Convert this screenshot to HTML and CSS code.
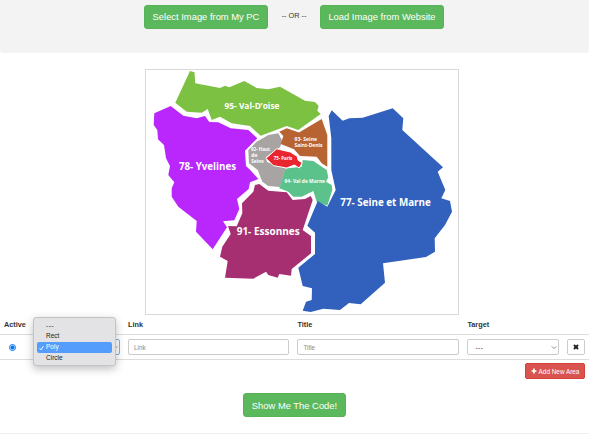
FILE: index.html
```html
<!DOCTYPE html>
<html lang="en">
<head>
<meta charset="utf-8">
<title>Image Map Generator</title>
<link rel="stylesheet" href="styles.css">
</head>
<body>
<header class="picker">
  <button class="btn btn-large"><span>Select Image from My PC</span></button>
  <span class="or">-- OR --</span>
  <button class="btn btn-large"><span>Load Image from Website</span></button>
</header>
<main>
  <div class="map-frame">
    <svg class="map" viewBox="146 70 312 244" aria-label="Map">
      <polygon fill="#7cc142" points="190,71 194.5,72.3 195.3,83.3 220,88 225,85.7 229.3,87.3 244.3,81 256.7,88 268.3,89.3 280,86.7 291.7,93.3 305,100.7 315,102 318.7,106 317.3,110.7 320.7,114 298.3,130 286.7,126 260.7,135.8 250,126 231.7,123.3 220,116.7 211.7,120 207.7,109 201.7,112.7 186.7,111.7 175.3,102.7"/>
      <polygon fill="#b927fc" points="170.7,106 183.3,115.7 196.7,118.3 205,116 209.3,122 218.3,122.3 230.7,128.3 248.3,130 257.3,138.3 245,150.7 246,166 251,170.7 258.3,179 250,182.3 248.7,189 237,199 239.3,209 234.3,220.3 223,221.3 227,227.3 212.7,249.3 196,231.7 196.7,221 178.3,206.7 171.7,196.7 171.7,188.3 174.3,182.3 168.3,175 170,166 166,158.3 164,145 158,139.3 157.3,130 153.7,125 154.3,113.3"/>
      <polygon fill="#a8a4a3" points="278.3,133.3 282.3,140.7 280,147.3 266,157 267,162 286,168.5 280,187 268.3,186 262.3,181.7 257.7,170 249,163.3 248.3,150 256.7,141.7 268.3,135"/>
      <polygon fill="#b86332" points="279.3,131.7 286.7,128.3 299,132.5 321.7,119 327.3,135 327.3,166.7 322,163.5 316.7,156.7 300,156 294,149.3 280.7,144 283.3,136"/>
      <polygon fill="#5cc28b" points="285.7,168.5 301.7,166.7 302.7,160 313.3,161 326.7,170 328.3,177.3 326,181.7 331.7,185 332.3,190 327.3,205.7 316.7,201.7 313.3,191 301.7,196.7 293.3,196.7 288.3,191.7 279.3,188.3"/>
      <polygon class="city" points="266,158.3 276.7,148.8 290.3,152 297.2,156.3 298.2,160.3 302.2,162.7 299.3,168 294.3,165 286.7,168 273.3,165.6"/>
      <polygon fill="#a62f72" points="255,185 259.3,184 268.3,190.7 286.7,192.3 292.7,200 305,199 310.7,196 312.7,200 302.7,230 311,236 311,253.3 291.7,269 291,275.7 279.3,274 277.7,277.7 268.3,275 266,271.7 253.3,278.7 225,277.7 227.7,261 220,256.7 222.3,246.7 230.7,234 228,226 236.7,226.3 242.3,213.3 242,203.3 253.3,191.7"/>
      <polygon fill="#3260bd" points="328.7,116 331.7,110.3 342.7,120.7 349.3,118.3 362.7,117.7 392.7,108.3 403.3,118.3 402.3,130 443,167.3 437.7,171.7 445.3,190 441.3,198.3 450,201 452,211.7 445,225 434.7,238.3 435,251.7 426,257 383,263.3 385,282.7 360.7,304.3 349,303 340,310 323.3,308.7 310.7,312 302.7,310.7 306,301.7 311.7,300 312,288.3 302.7,286 298.3,267.7 315,254 315,232.7 307.3,225.7 317.7,201 327.3,206.7 335.7,190 331.3,170 331.3,138.3"/>
      <g class="label label-m">
        <text x="224.5" y="108.5" textLength="55" lengthAdjust="spacingAndGlyphs">95- Val-D’oise</text>
      </g>
      <g class="label label-l">
        <text x="179" y="170" textLength="57" lengthAdjust="spacingAndGlyphs">78- Yvelines</text>
        <text x="236.7" y="235.2" textLength="63" lengthAdjust="spacingAndGlyphs">91- Essonnes</text>
        <text x="340.3" y="206.2" textLength="90.5" lengthAdjust="spacingAndGlyphs">77- Seine et Marne</text>
      </g>
      <g class="label label-s">
        <text x="251" y="151.3" textLength="19" lengthAdjust="spacingAndGlyphs">92- Haut</text>
        <text x="251.3" y="157.3">de</text>
        <text x="251.3" y="163.3" textLength="12.5" lengthAdjust="spacingAndGlyphs">Seine</text>
        <text x="294.5" y="140.7" textLength="22.5" lengthAdjust="spacingAndGlyphs">93- Seine</text>
        <text x="294.5" y="147.1" textLength="28" lengthAdjust="spacingAndGlyphs">Saint-Denis</text>
        <text x="273.8" y="160" textLength="18.5" lengthAdjust="spacingAndGlyphs">75- Paris</text>
        <text x="284.5" y="182.8" textLength="40.5" lengthAdjust="spacingAndGlyphs">94- Val de Marne</text>
      </g>
    </svg>
  </div>

  <section class="areas">
    <div class="row head">
      <span>Active</span><span></span><span>Link</span><span>Title</span><span>Target</span><span></span>
    </div>
    <div class="row entry">
      <span class="radio"></span>
      <div class="shape">
        <div class="field select shape-select">
          <svg class="chevron" viewBox="0 0 8 6"><path d="M1 1.5 4 4.5 7 1.5"/></svg>
        </div>
        <ul class="menu">
          <li class="dashes">---</li>
          <li>Rect</li>
          <li class="chosen"><svg class="check" viewBox="0 0 8 8"><path d="M1 4.5 3 7 7 1"/></svg>Poly</li>
          <li>Circle</li>
        </ul>
      </div>
      <div class="field placeholder">Link</div>
      <div class="field placeholder">Title</div>
      <div class="field select"><span class="dashes">---</span>
        <svg class="chevron" viewBox="0 0 8 6"><path d="M1 1.5 4 4.5 7 1.5"/></svg>
      </div>
      <button class="remove" aria-label="Remove"><svg viewBox="0 0 8 8"><path d="M1.3 1.3 6.7 6.7M6.7 1.3 1.3 6.7"/></svg></button>
    </div>
    <div class="actions">
      <button class="add"><svg viewBox="0 0 8 8"><path d="M4 .8V7.2M.8 4H7.2"/></svg><span>Add New Area</span></button>
    </div>
  </section>
  <div class="generate"><button class="btn btn-large btn-code"><span>Show Me The Code!</span></button></div>
</main>
</body>
</html>
```
FILE: styles.css
```css
* { box-sizing: border-box; }

body {
  margin: 0;
  height: 436px;
  overflow: hidden;
  background: #fff;
  color: #333;
  font: 7px "Liberation Sans", Arial, sans-serif;
}

button {
  margin: 0;
  padding: 0;
  font-family: inherit;
}

.picker {
  display: flex;
  justify-content: center;
  align-items: flex-start;
  gap: 12px;
  width: 589px;
  height: 53px;
  padding-top: 5px;
  padding-right: 1px;
  background: #f3f3f3;
  border-radius: 0 0 3px 3px;
}

.picker .btn { padding-bottom: 2px; }

.or {
  width: 28px;
  font-size: 7.3px;
  line-height: 22px;
  text-align: center;
  white-space: nowrap;
}

.btn {
  color: #fff;
  background: #5cb85c;
  border: 1px solid #56b356;
  border-radius: 3px;
}

.btn-large {
  width: 124px;
  height: 24px;
  font-size: 9.4px;
  white-space: nowrap;
}

.map-frame {
  width: 314px;
  height: 246px;
  margin: 16px 0 0 145px;
  border: 1px solid #d9d9d9;
}

.map {
  display: block;
  width: 312px;
  height: 244px;
}

.city {
  fill: #e92630;
  stroke: #fff;
  stroke-width: 1;
}

.label {
  fill: #fff;
  font-family: "Open Sans", "Noto Sans", sans-serif;
  font-weight: 700;
}

.label-m { font-size: 8.5px; }
.label-l { font-size: 10.5px; }
.label-s { font-size: 5px; }

.areas {
  width: 589px;
}

.row {
  display: grid;
  grid-template-columns: 17px 91px 161.4px 162px 92px 18px;
  column-gap: 8px;
  padding-left: 4px;
  border-bottom: 1px solid #ddd;
}

.head {
  height: 20px;
  font-size: 7.3px;
  line-height: 20px;
  font-weight: 700;
}

.entry {
  height: 25px;
  align-items: center;
}

.radio {
  width: 7px;
  height: 7px;
  margin-left: 5px;
  border: 1px solid #0a75f5;
  border-radius: 50%;
  background: radial-gradient(circle, #0a75f5 0 1.8px, #fff 2.3px);
}

.field {
  height: 16px;
  border: 1px solid #ccc;
  border-radius: 2px;
  background: #fff;
  font-size: 6.3px;
  line-height: 15px;
}

.placeholder {
  padding-left: 5px;
  color: #888;
}

.select {
  display: flex;
  justify-content: space-between;
  padding: 0 1px 0 7px;
}

.dashes { letter-spacing: .6px; }

.shape { position: relative; }

.shape-select {
  justify-content: flex-end;
  margin-left: 6px;
  border-color: #75b5e8;
}

.chevron {
  width: 6px;
  height: 5px;
  margin-top: 5px;
  fill: none;
  stroke: #666;
  stroke-width: 1;
}

.menu {
  position: absolute;
  left: 4px;
  top: -22px;
  width: 83px;
  height: 49px;
  margin: 0;
  padding: 2.5px 3px;
  list-style: none;
  color: #222;
  background: #e3e3e5;
  border: .5px solid #c4c4c6;
  border-radius: 3px;
  box-shadow: 0 3px 8px rgba(0, 0, 0, .25);
  font-size: 6.5px;
  line-height: 10.9px;
}

.menu li {
  position: relative;
  height: 10.9px;
  padding-left: 9px;
}

.menu .chosen {
  color: #fff;
  background: #549dfc;
  border-radius: 2px;
}

.check {
  position: absolute;
  left: 2px;
  top: 3px;
  width: 5px;
  height: 6px;
  fill: none;
  stroke: #fff;
  stroke-width: 1.5;
}

.remove {
  display: grid;
  place-items: center;
  width: 18px;
  height: 16px;
  background: #fff;
  border: 1px solid #ccc;
  border-radius: 2px;
}

.remove svg {
  width: 6px;
  height: 6px;
  stroke: #222;
  stroke-width: 2.5;
}

.actions {
  display: flex;
  justify-content: flex-end;
  padding: 3px 4px 0 0;
}

.add {
  display: flex;
  align-items: center;
  justify-content: center;
  gap: 2px;
  width: 60px;
  height: 16px;
  color: #fff;
  background: #d9534f;
  border: 1px solid #d43f3a;
  border-radius: 2px;
  font-size: 6.4px;
  white-space: nowrap;
}

.add svg {
  width: 6px;
  height: 6px;
  stroke: #fff;
  stroke-width: 2.2;
}

.generate {
  display: flex;
  justify-content: center;
  width: 589px;
  height: 55px;
  padding-top: 14px;
  border-bottom: 1px solid #eee;
}

.btn-code { width: 103px; }
```
